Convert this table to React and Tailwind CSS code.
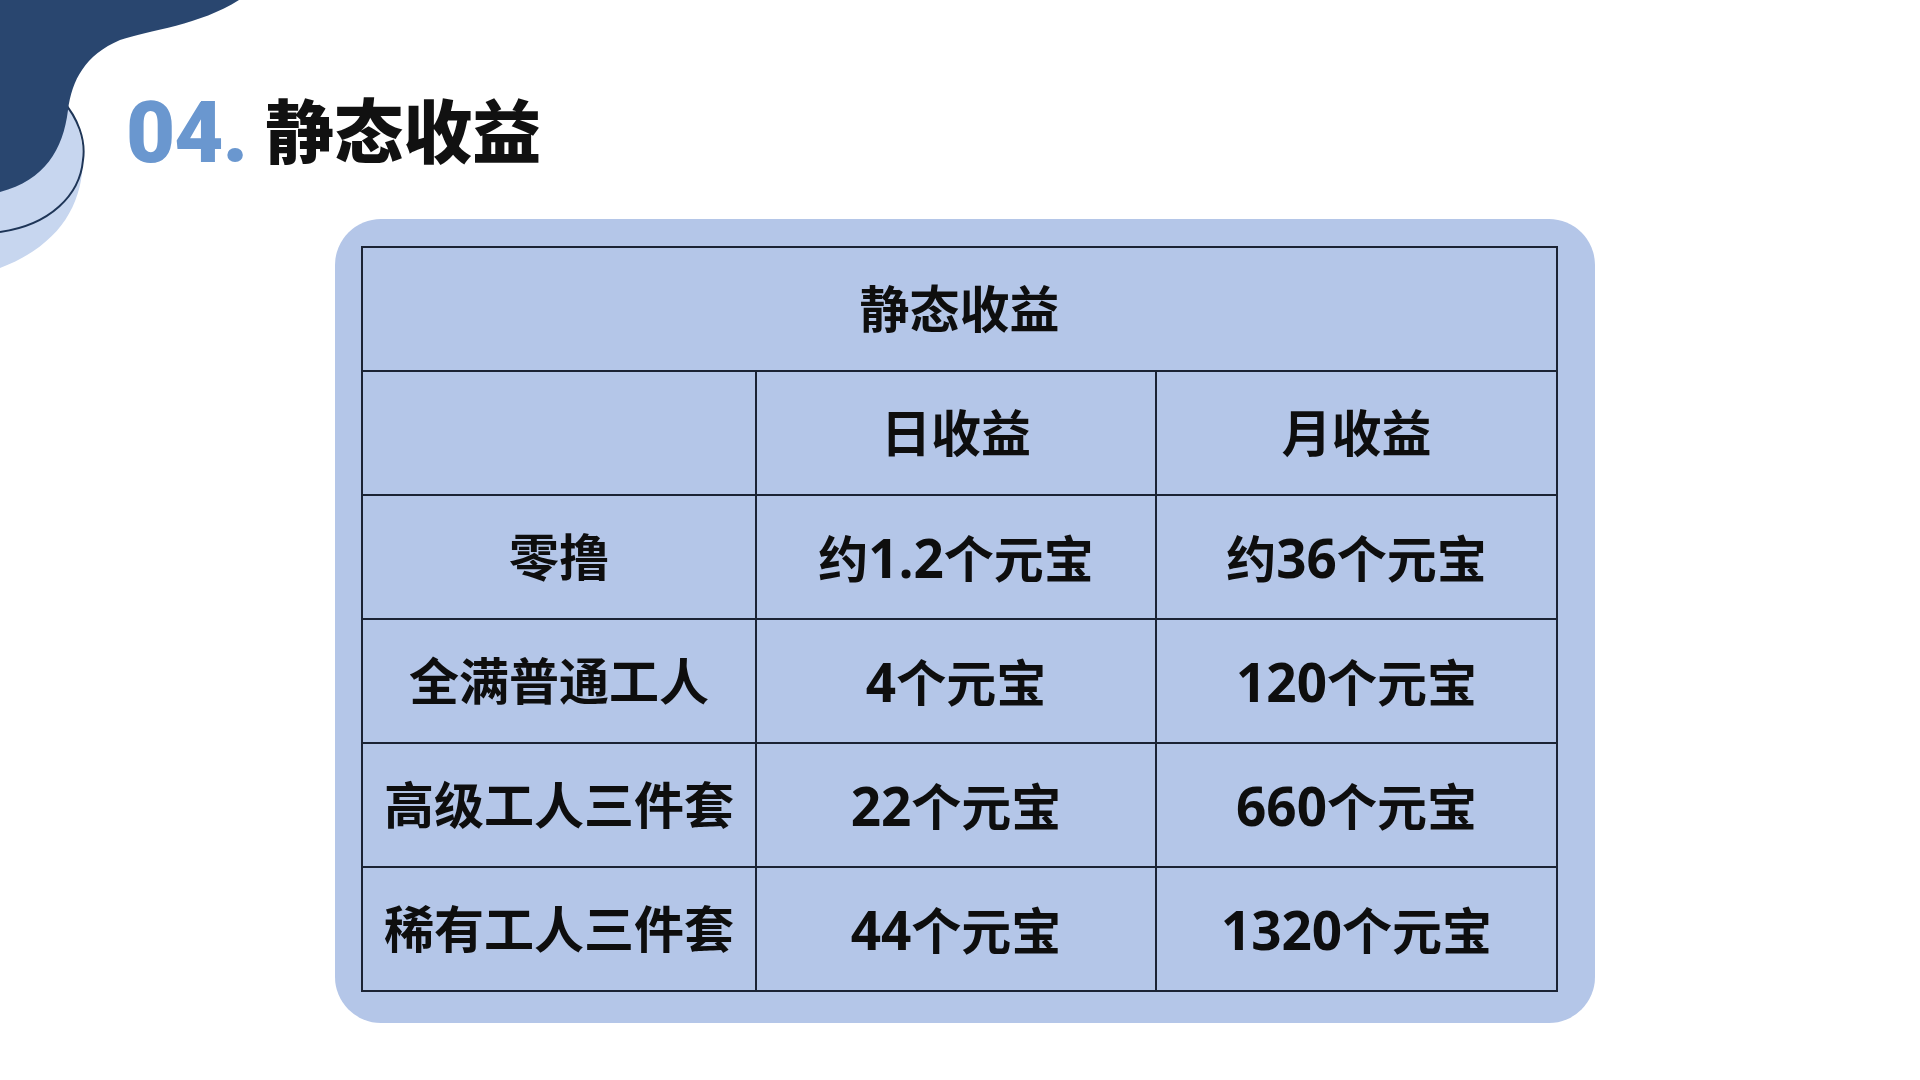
import React from "react";

function Cell({ text, className = "", colSpan }) {
  const parts = text.split(/([0-9.]+)/).filter(Boolean);
  return (
    <td
      colSpan={colSpan}
      className={"border-2 border-[#1b2334] text-center align-middle p-0 " + className}
    >
      {parts.map((p, i) =>
        /^[0-9.]+$/.test(p) ? (
          <span key={i} className="text-[53px]">{p}</span>
        ) : (
          <span key={i}>{p}</span>
        )
      )}
    </td>
  );
}

const rows = [
  ["零撸", "约1.2个元宝", "约36个元宝"],
  ["全满普通工人", "4个元宝", "120个元宝"],
  ["高级工人三件套", "22个元宝", "660个元宝"],
  ["稀有工人三件套", "44个元宝", "1320个元宝"],
];

export default function App() {
  return (
    <div className="relative w-[1920px] h-[1080px] bg-white overflow-hidden">
      <svg
        className="absolute top-0 left-0"
        width="260"
        height="300"
        viewBox="0 0 260 300"
      >
        <path d="M0,60 C60,80 84,120 83,160 C82,205 60,245 0,268 Z" fill="#c7d6ef" />
        <path
          d="M62,100 C78,118 86,140 83,160 C80,195 50,225 0,232"
          fill="none"
          stroke="#1e3557"
          strokeWidth="2"
        />
        <path
          d="M0,0 L239,0 C200,25 150,30 120,40 C85,55 72,80 68,110 C63,150 45,180 0,192 Z"
          fill="#29466f"
        />
      </svg>

      <div className="relative pt-[91px] pl-[126px]">
        <div className="flex items-baseline h-[84px] leading-none">
          <span
            className="text-[85px] font-black text-[#6a97cf] tracking-[-1px]"
            style={{ fontFamily: 'Roboto, "Liberation Sans", sans-serif' }}
          >
            04.
          </span>
          <span
            className="ml-[18px] text-[69px] font-black text-[#111111] relative -top-[4px]"
            style={{ fontFamily: '"Noto Sans CJK SC", sans-serif' }}
          >
            静态收益
          </span>
        </div>
      </div>

      <div className="ml-[335px] mt-[44px] w-[1260px] h-[804px] rounded-[46px] bg-[#b4c6e8] pl-[26px] pt-[27px]">
        <table
          className="table-fixed border-collapse w-[1195px] text-[50px] font-bold text-[#0e0e0e] leading-none"
          style={{ fontFamily: '"Open Sans", "Noto Sans CJK SC", sans-serif' }}
        >
          <colgroup>
            <col className="w-[394px]" />
            <col className="w-[400px]" />
            <col className="w-[401px]" />
          </colgroup>
          <tbody>
            <tr className="h-[124px]">
              <Cell text="静态收益" colSpan={3} />
            </tr>
            <tr className="h-[124px]">
              <Cell text="" />
              <Cell text="日收益" />
              <Cell text="月收益" />
            </tr>
            {rows.map((r, i) => (
              <tr key={i} className="h-[124px]">
                {r.map((c, j) => (
                  <Cell key={j} text={c} />
                ))}
              </tr>
            ))}
          </tbody>
        </table>
      </div>
    </div>
  );
}
